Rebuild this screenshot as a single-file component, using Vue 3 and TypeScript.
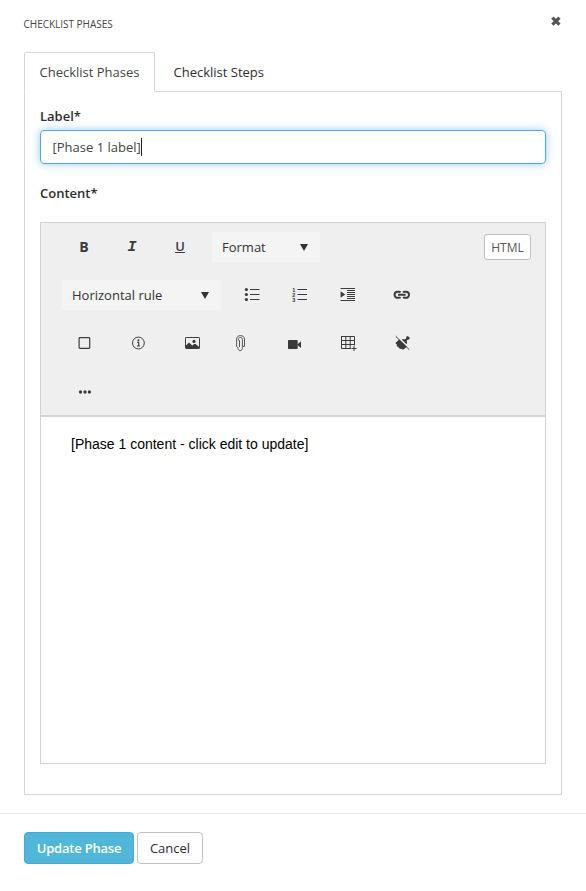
<script setup lang="ts">
import { ref } from 'vue'

const tabs = ['Checklist Phases', 'Checklist Steps']
const active = ref(0)
const label = ref('[Phase 1 label]')
</script>

<template>
  <div class="dialog">
    <header class="head">
      <h1>CHECKLIST PHASES</h1>
      <svg class="close" width="12" height="12" viewBox="0 0 12 12"><path d="M2.4 2.6l7 7M9.4 2.6l-7 7" /></svg>
    </header>

    <nav class="tabs">
      <div v-for="(t, i) in tabs" :key="t" class="tab" :class="{ active: i === active }" @click="active = i">{{ t }}</div>
    </nav>

    <section class="panel">
      <div class="label">Label*</div>
      <div class="field"><span>{{ label }}</span><i class="caret"></i></div>
      <div class="label second">Content*</div>

      <div class="editor">
        <div class="toolbar">
          <div class="row">
            <span class="cell bold">B</span>
            <span class="cell italic">I</span>
            <span class="cell"><span class="under">U</span></span>
            <div class="select format"><span>Format</span><i class="arrow"></i></div>
            <button class="html">HTML</button>
          </div>
          <div class="row">
            <div class="select rule"><span>Horizontal rule</span><i class="arrow"></i></div>
            <span class="cell">
              <svg viewBox="0 0 20 20"><path class="line" d="M8 4.5h9.5M8 9.5h9.5M8 14.5h9.5" /><g class="fill"><circle cx="4.4" cy="4.5" r="1.6" /><circle cx="4.4" cy="9.5" r="1.6" /><circle cx="4.4" cy="14.5" r="1.6" /></g></svg>
            </span>
            <span class="cell">
              <svg viewBox="0 0 20 20"><path class="line" d="M7.5 4.5H17M7.5 9.5H17M7.5 14.5H17" /><g class="nums"><text x="2.3" y="6.5">1</text><text x="2.3" y="11.5">2</text><text x="2.3" y="16.5">3</text></g></svg>
            </span>
            <span class="cell">
              <svg viewBox="0 0 20 20"><path class="line" d="M2.5 3.5H17M9 5.5h8M9 7.5h8M9 9.5h8M9 11.5h8M9 13.5h8M2.5 15.5H17" /><path class="fill" d="M2.6 6.2L7.2 9.5l-4.6 3.3z" /></svg>
            </span>
            <span class="cell gap">
              <svg viewBox="0 0 20 20"><path class="thick" d="M8.6 7.3A3 3 0 0 0 6.5 6.8H5.6a3 3 0 0 0 0 6h.9a3 3 0 0 0 2.1-.5M11 7.3a3 3 0 0 1 2.1-.5h.9a3 3 0 0 1 0 6h-.9a3 3 0 0 1-2.1-.5M6 9.8h7.6" /></svg>
            </span>
          </div>
          <div class="row">
            <span class="cell"><svg viewBox="0 0 20 20"><rect class="box" x="5.1" y="4.7" width="10.6" height="10.7" rx=".8" /></svg></span>
            <span class="cell gap"><svg viewBox="0 0 20 20"><circle class="line" cx="10.4" cy="10" r="5.9" /><circle class="fill" cx="10.4" cy="7.2" r="1" /><path class="info" d="M9 9.2h1.7v3.7M9 13h3" /></svg></span>
            <span class="cell gap"><svg viewBox="0 0 20 20"><rect class="line" x="3.5" y="4.5" width="14" height="11" rx=".6" /><path class="fill" d="M4 15.5V12.6L7 9.4l3.3 3.2 1.8-1.6 1.5.1 3.9 3.2v1.2z" /><circle class="fill" cx="12" cy="8.4" r="1.6" /></svg></span>
            <span class="cell"><svg viewBox="0 0 20 20"><path class="clip" d="M6.6 13.3V6.2C6.6 3.9 8.3 2.6 10.5 2.6s4 1.3 4 3.6v7.2M8.4 7.5V6.2c0-1.2.8-1.8 2-1.8 1.3 0 2 .8 2 2v8.2c0 1.7-.7 3-2.2 3s-2.4-1.4-2.4-3M9.5 14V7.2M14.5 13.4h-1.6M6.6 13.2l1.3 1.6" /></svg></span>
            <span class="cell gap"><svg viewBox="0 0 20 20"><rect class="fill" x="4" y="7" width="9.7" height="9" rx=".8" /><path class="fill" d="M13.5 11.2L17 8.2v6.8l-3.5-2.7z" /></svg></span>
            <span class="cell gap"><svg viewBox="0 0 20 20"><path class="line" d="M3.5 3.5h13v9M3.5 3v12.5h9.5M3.5 7.5h13M3.5 11.5h13M7.8 3.5v12M12.2 3.5v12M13.5 15.5h5M16 13v5" /></svg></span>
            <span class="cell gap"><svg viewBox="0 0 20 20"><path class="fill" d="M3.3 10.1L7.2 6.4l7.6 7.4-3.6 3-1.9-1-1.1.2-3.5-3.2.1-1.5z" /><path class="fill" d="M9.7 6.5l1.5-.6 1.6.7 1.4-1.4.1-1.4 1.4-.9 2.1 1.9-.7 1.8-1.4.1-1.2 1.4.7 1.5-.7 1.6z" /><path class="line" d="M3.6 3.2L17.2 16.6" /></svg></span>
          </div>
          <div class="row">
            <span class="cell"><svg viewBox="0 0 20 20"><g class="fill"><circle cx="6.5" cy="11" r="1.65" /><circle cx="11" cy="11" r="1.65" /><circle cx="15.4" cy="11" r="1.65" /></g></svg></span>
          </div>
        </div>
        <div class="content">[Phase 1 content - click edit to update]</div>
      </div>
    </section>

    <footer class="foot">
      <button class="btn primary">Update Phase</button>
      <button class="btn">Cancel</button>
    </footer>
  </div>
</template>

<style>
body { margin: 0; background: #fff; }
</style>

<style scoped>
* { box-sizing: border-box; }
.dialog { width: 586px; height: 891px; overflow: hidden; display: flex; flex-direction: column; font: 13px/20px "Open Sans", sans-serif; color: #2d2d31; }
.head { height: 52px; flex: none; display: flex; justify-content: space-between; align-items: flex-start; padding: 14px 24px 0 23.5px; }
h1 { margin: 0; font-size: 10px; line-height: 20px; font-weight: 400; color: #444; letter-spacing: -.02px; }
.close { margin-top: 1px; fill: none; stroke: #555; stroke-width: 3.3; }
.tabs { display: flex; height: 40px; flex: none; margin: 0 24px -1px; position: relative; }
.tab { padding: 9px 14.5px 0; border: 1px solid transparent; width: 131px; white-space: nowrap; }
.tab + .tab { padding-left: 17.5px; }
.tab.active { background: #fff; border-color: #d5d5d5; border-bottom-color: #fff; border-radius: 2px 2px 0 0; color: #444; }
.panel { height: 704px; flex: none; margin: 0 24px; border: 1px solid #d5d5d5; padding: 15px 15px 0; }
.label { font-weight: 600; height: 23px; line-height: 19px; }
.field { height: 34px; border: 1px solid #52a8ec; border-radius: 4px; box-shadow: 0 0 8px rgba(82, 168, 236, .6); padding: 0 11.5px; display: flex; align-items: center; color: #444; }
.caret { width: 1px; height: 18px; background: #222; }
.label.second { margin-top: 20px; height: 38px; }
.editor { height: 542px; border: 1px solid #d2d2d2; display: flex; flex-direction: column; }
.toolbar { height: 194px; flex: none; background: #efefef; border-bottom: 2px solid #d5d5d5; padding-left: 19px; }
.row { height: 48px; display: flex; align-items: center; }
.cell { width: 48px; height: 48px; display: flex; align-items: center; justify-content: center; color: #3c3c3c; font-size: 14px; }
.cell svg { width: 20px; height: 20px; display: block; }
.gap { margin-left: 6px; }
.bold { font-weight: 700; font-size: 14px; }
.italic { font: italic 700 15px "Liberation Mono", monospace; }
.under { font-weight: 600; font-size: 13px; line-height: 11px; height: 12px; border-bottom: 1px solid #3c3c3c; }
.fill { fill: #3a3a3a; }
.line { fill: none; stroke: #3c3c3c; stroke-width: 1; }
.thick { fill: none; stroke: #3c3c3c; stroke-width: 2; }
.box { fill: none; stroke: #3c3c3c; stroke-width: 1.2; }
.info { fill: none; stroke: #333; stroke-width: 1.1; }
.clip { fill: none; stroke: #555; stroke-width: 1; }
.nums { font: 700 5.5px "Liberation Sans", sans-serif; fill: #333; }
.select { height: 30px; background: #f4f4f4; display: flex; align-items: center; justify-content: space-between; color: #333; padding: 0 12px 0 10px; }
.format { width: 108px; margin-left: 8px; }
.rule { width: 159px; margin: 0 7px 0 2px; }
.arrow { border: 4.5px solid transparent; border-top: 7px solid #333; border-bottom: 0; }
.html { margin-left: auto; margin-right: 14px; width: 47px; height: 26px; border: 1px solid #bfbfbf; border-radius: 3px; background: #fff; color: #555; font: 12px/22px "Open Sans", sans-serif; padding: 1px 0 0; }
.content { padding: 17px 30px; font: 14px/20px "Liberation Sans", Arial, sans-serif; color: #000; }
.foot { margin-top: 18px; border-top: 1px solid #e8e8e8; padding: 18px 24px; display: flex; gap: 3px; }
.btn { height: 32px; width: 66px; border: 1px solid #c2c2c2; border-radius: 4px; background: #fff; color: #2d2d31; font: 13px/20px "Open Sans", sans-serif; padding: 0; }
.primary { width: 110px; background: #50b7da; border-color: #43acd1; color: #fff; font-weight: 600; letter-spacing: -.2px; }
</style>
